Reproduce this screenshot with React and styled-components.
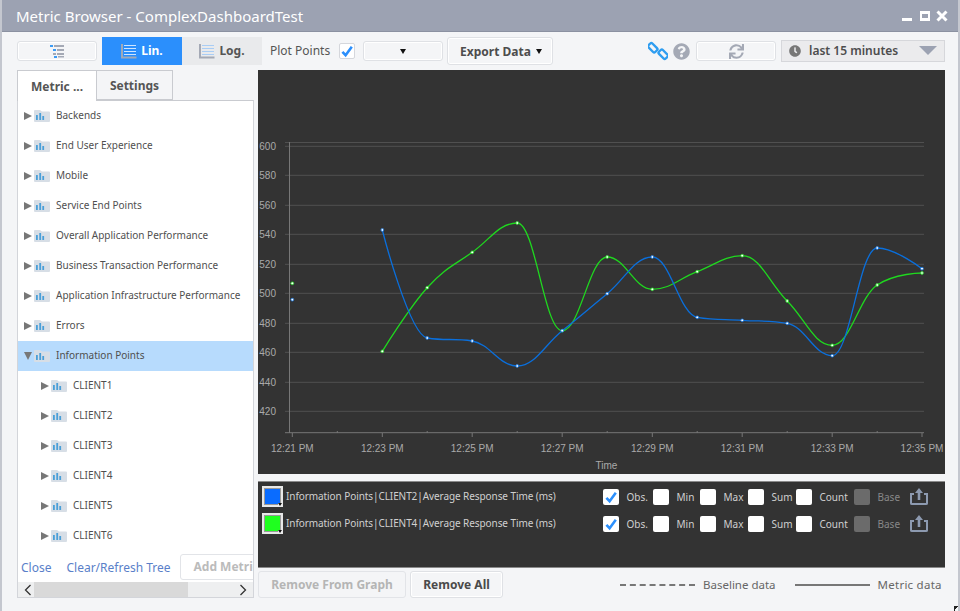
import React from 'react'
import styled, { createGlobalStyle } from 'styled-components'
import { FaSync, FaQuestionCircle, FaClock } from 'react-icons/fa'

const GlobalStyle = createGlobalStyle`
  html, body { margin: 0; padding: 0; background: #f4f5f7; overflow: hidden; }
  body { font-family: "Noto Sans", "Open Sans", sans-serif; }
`

const Window = styled.div`
  width: 960px;
  height: 611px;
  box-sizing: border-box;
  display: flex;
  flex-direction: column;
  background: #f4f5f7;
  border-left: 2px solid #c4c7cf;
  border-right: 2px solid #c4c7cf;
  position: relative;
  overflow: hidden;
`

const TitleBar = styled.div`
  height: 32px;
  margin: 0 -2px;
  padding: 0 12px 0 16px;
  box-sizing: border-box;
  background: #9ca2b2;
  border-bottom: 1px solid #8b91a1;
  display: flex;
  align-items: center;
  justify-content: space-between;
  color: #fff;
  font-size: 15px;
  flex: none;
`

const WinControls = styled.div`
  display: flex;
  align-items: center;
  gap: 5.5px;
`

const Toolbar = styled.div`
  height: 38px;
  flex: none;
  display: flex;
  align-items: center;
  padding-left: 15px;
  padding-right: 13px;
`

const FlatButton = styled.div`
  width: 80px;
  height: 20px;
  box-sizing: border-box;
  border: 1px solid #dfe1e5;
  border-radius: 3px;
  background: #f4f5f7;
  box-shadow: inset 0 0 0 1px #fff;
  display: flex;
  align-items: center;
  justify-content: center;
  margin-left: ${p => p.$ml || 0}px;
`

const Toggle = styled.div`
  width: 80px;
  height: 28px;
  box-sizing: border-box;
  display: flex;
  align-items: center;
  justify-content: center;
  gap: 4px;
  font-size: 12px;
  font-weight: 700;
  padding-bottom: 1px;
  margin-left: ${p => p.$ml || 0}px;
  color: ${p => (p.$active ? '#fff' : '#555')};
  background: ${p => (p.$active ? '#2b8ffc' : '#e9eaec')};
`

const PlotLabel = styled.span`
  margin-left: 8px;
  width: 69px;
  font-size: 12px;
  color: #555;
  padding-bottom: 1px;
`

const CheckBox = styled.div`
  width: 16px;
  height: 16px;
  box-sizing: border-box;
  flex: none;
  border-radius: 2px;
  background: ${p => (p.$disabled ? '#6b6b6b' : '#fff')};
  border: ${p => (p.$outlined ? '1px solid #d5d7dc' : 'none')};
  display: flex;
  align-items: center;
  justify-content: center;
`

const ExportButton = styled.div`
  width: 106px;
  height: 28px;
  box-sizing: border-box;
  margin-left: 4px;
  padding-left: 2px;
  border: 1px solid #dfe1e5;
  border-radius: 3px;
  background: #f4f5f7;
  box-shadow: inset 0 0 0 1px #fff;
  display: flex;
  align-items: center;
  justify-content: center;
  gap: 5px;
  font-size: 12px;
  font-weight: 700;
  color: #4d4d4d;
`

const Caret = styled.span`
  width: 0;
  height: 0;
  border-left: 3.5px solid transparent;
  border-right: 3.5px solid transparent;
  border-top: 5px solid #111;
`

const ToolSpacer = styled.div`
  flex: 1;
`

const HelpSlot = styled.div`
  display: flex;
  align-items: center;
  color: #a4a9b5;
  margin-left: 5px;
`

const TimeSelect = styled.div`
  width: 164px;
  height: 22px;
  box-sizing: border-box;
  margin-left: 5px;
  padding: 0 7px 1px;
  background: #ebebed;
  border: 1px solid #d6d7db;
  display: flex;
  align-items: center;
  font-size: 12px;
  font-weight: 600;
  color: #4d4d4d;
  svg { color: #777; margin-right: 8px; }
`

const TimeCaret = styled.span`
  margin-left: auto;
  width: 0;
  height: 0;
  border-left: 9px solid transparent;
  border-right: 9px solid transparent;
  border-top: 9px solid #9ca2b2;
`

const Main = styled.div`
  display: flex;
  flex: none;
  padding-left: 15px;
`

const LeftCol = styled.div`
  width: 237px;
  flex: none;
`

const Tabs = styled.div`
  display: flex;
  height: 30px;
`

const Tab = styled.div`
  width: ${p => p.$w}px;
  box-sizing: border-box;
  height: ${p => (p.$active ? 31 : 30)}px;
  position: relative;
  z-index: ${p => (p.$active ? 1 : 0)};
  border: 1px solid #c9cbd0;
  border-bottom: ${p => (p.$active ? 'none' : '1px solid #c9cbd0')};
  border-left: ${p => (p.$active ? '1px solid #c9cbd0' : 'none')};
  background: ${p => (p.$active ? '#fff' : '#f4f5f7')};
  display: flex;
  align-items: center;
  justify-content: center;
  font-size: 12px;
  font-weight: 700;
  color: #555;
`

const TreePanel = styled.div`
  height: 498px;
  box-sizing: border-box;
  border: 1px solid #d3d5da;
  border-top: 1px solid #c9cbd0;
  background: #fff;
  display: flex;
  flex-direction: column;
  overflow: hidden;
`

const TreeList = styled.div`
  height: 450px;
  flex: none;
`

const TreeRow = styled.div`
  height: 30px;
  display: flex;
  align-items: center;
  padding-left: ${p => (p.$child ? 23 : 6)}px;
  font-size: 10px;
  color: #4f4f4f;
  box-sizing: border-box;
  background: ${p => (p.$selected ? '#b7dbfd' : 'transparent')};
  white-space: nowrap;
`

const TreeArrow = styled.span`
  width: 0;
  height: 0;
  flex: none;
  ${p => p.$open
    ? `border-left: 4px solid transparent; border-right: 4px solid transparent; border-top: 8px solid #777; margin-right: 2px;`
    : `border-top: 4px solid transparent; border-bottom: 4px solid transparent; border-left: 8px solid #777; margin-right: 2px;`}
`

const TreeLabel = styled.span`
  margin-left: 6px;
  padding-bottom: 2px;
`

const TreeFooter = styled.div`
  height: 31px;
  flex: none;
  display: flex;
  align-items: center;
  padding-left: 3px;
  font-size: 12px;
  color: #5a7fc9;
  overflow: hidden;
  white-space: nowrap;
`

const FooterLink = styled.span`
  margin-right: ${p => p.$mr}px;
  flex: none;
  padding-top: 1px;
`

const AddButton = styled.div`
  width: 90px;
  height: 26px;
  flex: none;
  box-sizing: border-box;
  border: 1px solid #e2e4e8;
  border-radius: 3px;
  padding-left: 13px;
  display: flex;
  align-items: center;
  font-weight: 700;
  color: #bbb;
`

const ScrollBar = styled.div`
  height: 16px;
  flex: none;
  background: #eeeff0;
  display: flex;
  align-items: center;
  justify-content: space-between;
  padding: 0 6px 0 6px;
  position: relative;
`

const ScrollThumb = styled.div`
  position: absolute;
  left: 16px;
  top: 0;
  width: 154px;
  height: 16px;
  background: #d9d9d9;
`

const RightCol = styled.div`
  width: 687px;
  flex: none;
  margin-left: 4px;
`

const ChartBox = styled.div`
  height: 404px;
  background: #333;
  svg { display: block; }
`

const LegendPanel = styled.div`
  height: 87px;
  margin-top: 7px;
  box-sizing: border-box;
  background: #333;
  border-top: 1px solid #8a8a8a;
  border-bottom: 1px solid #8a8a8a;
  padding: 1px 0 0 4px;
`

const LegendRow = styled.div`
  height: 27px;
  display: flex;
  align-items: center;
`

const Swatch = styled.div`
  width: 21px;
  height: 21px;
  box-sizing: border-box;
  border: 2px solid #e8e8e8;
  outline: 1px solid #999;
  outline-offset: -3px;
  background: ${p => p.$color};
  position: relative;
  flex: none;
  &::after {
    content: '';
    position: absolute;
    right: -1px;
    bottom: -1px;
    width: 0;
    height: 0;
    background: #eee;
    border-left: 2.5px solid transparent;
    border-right: 2.5px solid transparent;
    border-top: 3px solid #111;
  }
`

const MetricName = styled.span`
  width: 320px;
  padding: 0 0 1px 3px;
  box-sizing: border-box;
  flex: none;
  color: #d0d0d0;
  font-size: 10px;
  letter-spacing: -0.08px;
  white-space: nowrap;
`

const Option = styled.div`
  width: ${p => p.$w}px;
  flex: none;
  display: flex;
  align-items: center;
  gap: 7.5px;
  font-size: 10px;
  color: ${p => (p.$dim ? '#888' : '#d0d0d0')};
`

const ActionRow = styled.div`
  display: flex;
  align-items: center;
  height: 27px;
  margin-top: 3px;
`

const ActionButton = styled.div`
  width: ${p => p.$w}px;
  height: 27px;
  box-sizing: border-box;
  margin-right: 4px;
  border: 1px solid ${p => (p.$disabled ? '#e2e4e8' : '#dfe1e5')};
  border-radius: 3px;
  box-shadow: ${p => (p.$disabled ? 'none' : 'inset 0 0 0 1px #fff')};
  display: flex;
  align-items: center;
  justify-content: center;
  font-size: 12px;
  font-weight: 700;
  color: ${p => (p.$disabled ? '#b5b5b5' : '#4a4a4a')};
`

const Key = styled.div`
  display: flex;
  align-items: center;
  font-size: 11.5px;
  letter-spacing: ${p => p.$ls || 0}px;
  color: #666;
  margin-left: ${p => p.$ml}px;
`

const KeyLine = styled.span`
  width: 75px;
  margin-right: 8px;
  border-top: 2px ${p => p.$style} #777;
`

const ResizeGrip = styled.span`
  position: absolute;
  right: -1px;
  bottom: 0;
  width: 5px;
  height: 5px;
  background: linear-gradient(135deg, #222 50%, transparent 50%);
`

// same smoothing as the chart lib's spline
const splinePath = pts => {
  const s = 1.5
  const d = 2.5
  const ctrl = pts.map((p, i) => {
    const a = pts[i - 1]
    const b = pts[i + 1]
    if (!a || !b) return { lx: p[0], ly: p[1], rx: p[0], ry: p[1] }
    const lx = (s * p[0] + a[0]) / d
    let ly = (s * p[1] + a[1]) / d
    const rx = (s * p[0] + b[0]) / d
    let ry = (s * p[1] + b[1]) / d
    const c = ((ry - ly) * (rx - p[0])) / (rx - lx) + p[1] - ry
    ly += c
    ry += c
    if (ly > a[1] && ly > p[1]) {
      ly = Math.max(a[1], p[1])
      ry = 2 * p[1] - ly
    } else if (ly < a[1] && ly < p[1]) {
      ly = Math.min(a[1], p[1])
      ry = 2 * p[1] - ly
    }
    if (ry > b[1] && ry > p[1]) {
      ry = Math.max(b[1], p[1])
      ly = 2 * p[1] - ry
    } else if (ry < b[1] && ry < p[1]) {
      ry = Math.min(b[1], p[1])
      ly = 2 * p[1] - ry
    }
    return { lx, ly, rx, ry }
  })
  let out = `M${pts[0][0]} ${pts[0][1]}`
  for (let i = 1; i < pts.length; i++) {
    out += ` C${ctrl[i - 1].rx} ${ctrl[i - 1].ry} ${ctrl[i].lx} ${ctrl[i].ly} ${pts[i][0]} ${pts[i][1]}`
  }
  return out
}

const xs = [382.3, 427.2, 472.2, 517.2, 562.2, 607.2, 652.3, 697.2, 742.2, 787.2, 832.2, 877.2, 922]
const blueY = [230, 338, 341, 366, 330.7, 293.7, 257, 317.3, 320.3, 323.3, 355.7, 248, 268.7]
const greenY = [351.3, 287.7, 252.3, 223, 330.7, 257, 289.3, 271.7, 255.7, 301, 345.3, 285, 273]

const yLabels = [
  ['600', 146.5], ['580', 175.5], ['560', 205.5], ['540', 234.5], ['520', 264.5],
  ['500', 293.5], ['480', 323.5], ['460', 352.5], ['440', 382.5], ['420', 411.5],
]
const xLabels = [
  ['12:21 PM', 292.3], ['12:23 PM', 382.3], ['12:25 PM', 472.2], ['12:27 PM', 562.2],
  ['12:29 PM', 652.3], ['12:31 PM', 742.2], ['12:33 PM', 832.2], ['12:35 PM', 922],
]
const minorX = [337.3, 427.2, 517.2, 607.2, 697.2, 787.2, 877.2]

const Series = ({ ys, color, first }) => {
  const pts = xs.map((x, i) => [x, ys[i]])
  return (
    <g>
      <path d={splinePath(pts)} fill="none" stroke={color} strokeWidth="1.3" />
      {[first, ...pts].map(([x, y]) => (
        <circle key={x} cx={x} cy={y} r="1.4" fill="#fff" stroke={color} strokeWidth="0.8" />
      ))}
    </g>
  )
}

const Chart = () => (
  <svg width="687" height="404" viewBox="258 70 687 404">
    {yLabels.map(([t, y]) => (
      <g key={t}>
        <line x1="285" x2="924" y1={y - 0.2} y2={y - 0.2} stroke="#505050" />
        <text x="276" y={y + 3} textAnchor="end" fontFamily="Liberation Sans" fontSize="10" fill="#aaa">{t}</text>
      </g>
    ))}
    <line x1="285" x2="924" y1="142.5" y2="142.5" stroke="#505050" />
    <line x1="289.5" x2="289.5" y1="142" y2="433" stroke="#777" />
    <line x1="285" x2="924" y1="432.7" y2="432.7" stroke="#777" />
    {xLabels.map(([t, x]) => (
      <g key={t}>
        <line x1={x} x2={x} y1="433" y2="437" stroke="#777" />
        <text x={x} y="452" textAnchor="middle" fontFamily="Liberation Sans" fontSize="10" fill="#aaa">{t}</text>
      </g>
    ))}
    {minorX.map(x => <line key={x} x1={x} x2={x} y1="431" y2="433" stroke="#777" />)}
    <text x="606.5" y="469" textAnchor="middle" fontFamily="Liberation Sans" fontSize="10" fill="#aaa">Time</text>
    <Series ys={greenY} color="#1fd81f" first={[292.3, 283.3]} />
    <Series ys={blueY} color="#0a6fdc" first={[292.3, 299.7]} />
  </svg>
)

const Tick = () => (
  <svg width="14" height="14" viewBox="0 0 14 14">
    <path d="M2.4 7.8 L5.6 11.2 L11.8 2.8" fill="none" stroke="#2b8ffc" strokeWidth="2.6" />
  </svg>
)

const ListIcon = () => (
  <svg width="15" height="14" viewBox="0 0 15 14">
    <rect x="0" y="1" width="3" height="2" fill="#3b9bf5" />
    <rect x="4" y="1" width="10" height="2" fill="#a4a9b5" />
    <rect x="3" y="5" width="3" height="2" fill="#3b9bf5" />
    <rect x="7" y="5" width="7" height="2" fill="#a4a9b5" />
    <rect x="3" y="9" width="3" height="2" fill="#a4a9b5" />
    <rect x="7" y="9" width="7" height="2" fill="#a4a9b5" />
    <rect x="4" y="12" width="3" height="2" fill="#3b9bf5" />
    <rect x="8" y="12" width="6" height="1.5" fill="#a4a9b5" />
  </svg>
)

const AxisIcon = ({ lines, axis }) => (
  <svg width="16" height="16" viewBox="0 0 16 16">
    <path d="M1 1 V14.5 H15.5" fill="none" stroke={axis} strokeWidth="2" />
    {[2, 5, 8, 11].map(y => <rect key={y} x="3" y={y} width="12" height="1" fill={lines} />)}
  </svg>
)

const FolderIcon = () => (
  <svg width="16" height="12" viewBox="0 0 16 12">
    <path d="M0 1 Q0 0 1 0 H6 L8 1.5 H15 Q16 1.5 16 2.5 V11 Q16 12 15 12 H1 Q0 12 0 11 Z" fill="#d7dee6" />
    <rect x="2" y="5" width="1.8" height="5" fill="#4a9fd8" />
    <rect x="5.3" y="3" width="1.8" height="7" fill="#4a9fd8" />
    <rect x="8.3" y="6" width="1.8" height="4" fill="#4a9fd8" />
  </svg>
)

const LinkIcon = () => (
  <svg width="20" height="20" viewBox="0 0 20 20">
    <g fill="none" stroke="#2e9df0" strokeWidth="2.4">
      <rect x="0" y="4" width="9.5" height="5.5" rx="1.5" transform="rotate(45 4.75 6.75)" />
      <rect x="10.5" y="10.5" width="9.5" height="5.5" rx="1.5" transform="rotate(45 15.25 13.25)" />
    </g>
  </svg>
)

const ShareIcon = () => (
  <svg width="18" height="17" viewBox="0 0 18 17">
    <path d="M4 6 H1 V15.5 Q1 16 2 16 H16 Q17 16 17 15.5 V6 H14" fill="none" stroke="#8d9ab0" strokeWidth="2" />
    <path d="M9 0 L13 5 H10.3 V12 H7.7 V5 H5 Z" fill="#8d9ab0" />
  </svg>
)

const WinIcon = ({ type }) => (
  <svg width="12" height="12" viewBox="0 0 12 12">
    {type === 'min' && <rect x="1" y="8" width="10" height="3" fill="#fff" />}
    {type === 'max' && <path d="M1 1 H11 V11 H1 Z M3 4 V8 H9 V4 Z" fill="#fff" fillRule="evenodd" />}
    {type === 'close' && <path d="M1.5 1.5 L10.5 10.5 M10.5 1.5 L1.5 10.5" stroke="#fff" strokeWidth="3" />}
  </svg>
)

const Chevron = ({ dir }) => (
  <svg width="8" height="12" viewBox="0 0 8 12">
    <path d={dir === 'left' ? 'M6.5 1 L1.5 6 L6.5 11' : 'M1.5 1 L6.5 6 L1.5 11'} fill="none" stroke="#333" strokeWidth="1.3" />
  </svg>
)

const roots = [
  'Backends', 'End User Experience', 'Mobile', 'Service End Points', 'Overall Application Performance',
  'Business Transaction Performance', 'Application Infrastructure Performance', 'Errors',
]
const clients = ['CLIENT1', 'CLIENT2', 'CLIENT3', 'CLIENT4', 'CLIENT5', 'CLIENT6']

const metrics = [
  { name: 'Information Points|CLIENT2|Average Response Time (ms)', color: '#0a6cff' },
  { name: 'Information Points|CLIENT4|Average Response Time (ms)', color: '#1fff1f' },
]

const App = () => {
  return (
    <Window>
      <GlobalStyle />
      <TitleBar>
        <span>Metric Browser - ComplexDashboardTest</span>
        <WinControls>
          <WinIcon type="min" />
          <WinIcon type="max" />
          <WinIcon type="close" />
        </WinControls>
      </TitleBar>

      <Toolbar>
        <FlatButton><ListIcon /></FlatButton>
        <Toggle $active $ml={5}><AxisIcon lines="#cfe5ff" axis="#9fa9b8" />Lin.</Toggle>
        <Toggle><AxisIcon lines="#a9cdf5" axis="#a4a9b5" />Log.</Toggle>
        <PlotLabel>Plot Points</PlotLabel>
        <CheckBox $outlined><Tick /></CheckBox>
        <FlatButton $ml={8}><Caret /></FlatButton>
        <ExportButton>Export Data<Caret /></ExportButton>
        <ToolSpacer />
        <LinkIcon />
        <HelpSlot><FaQuestionCircle size={17} /></HelpSlot>
        <FlatButton $ml={6}><FaSync size={15} color="#a4a9b5" /></FlatButton>
        <TimeSelect>
          <FaClock size={12} />
          last 15 minutes
          <TimeCaret />
        </TimeSelect>
      </Toolbar>

      <Main>
        <LeftCol>
          <Tabs>
            <Tab $w={80} $active>Metric ...</Tab>
            <Tab $w={76}>Settings</Tab>
          </Tabs>
          <TreePanel>
            <TreeList>
              {roots.map(r => (
                <TreeRow key={r}>
                  <TreeArrow /><FolderIcon /><TreeLabel>{r}</TreeLabel>
                </TreeRow>
              ))}
              <TreeRow $selected>
                <TreeArrow $open /><FolderIcon /><TreeLabel>Information Points</TreeLabel>
              </TreeRow>
              {clients.map(c => (
                <TreeRow key={c} $child>
                  <TreeArrow /><FolderIcon /><TreeLabel>{c}</TreeLabel>
                </TreeRow>
              ))}
            </TreeList>
            <TreeFooter>
              <FooterLink $mr={15}>Close</FooterLink>
              <FooterLink $mr={9}>Clear/Refresh Tree</FooterLink>
              <AddButton>Add Metric</AddButton>
            </TreeFooter>
            <ScrollBar>
              <ScrollThumb />
              <Chevron dir="left" />
              <Chevron dir="right" />
            </ScrollBar>
          </TreePanel>
        </LeftCol>

        <RightCol>
          <ChartBox><Chart /></ChartBox>
          <LegendPanel>
            {metrics.map(m => (
              <LegendRow key={m.name}>
                <Swatch $color={m.color} />
                <MetricName>{m.name}</MetricName>
                <Option $w={50}><CheckBox><Tick /></CheckBox>Obs.</Option>
                <Option $w={47}><CheckBox />Min</Option>
                <Option $w={48}><CheckBox />Max</Option>
                <Option $w={48}><CheckBox />Sum</Option>
                <Option $w={58}><CheckBox />Count</Option>
                <Option $w={56} $dim><CheckBox $disabled />Base</Option>
                <ShareIcon />
              </LegendRow>
            ))}
          </LegendPanel>
          <ActionRow>
            <ActionButton $w={148} $disabled>Remove From Graph</ActionButton>
            <ActionButton $w={93}>Remove All</ActionButton>
            <Key $ml={113}><KeyLine $style="dashed" />Baseline data</Key>
            <Key $ml={19} $ls={0.25}><KeyLine $style="solid" />Metric data</Key>
          </ActionRow>
        </RightCol>
      </Main>
      <ResizeGrip />
    </Window>
  )
}

export default App
